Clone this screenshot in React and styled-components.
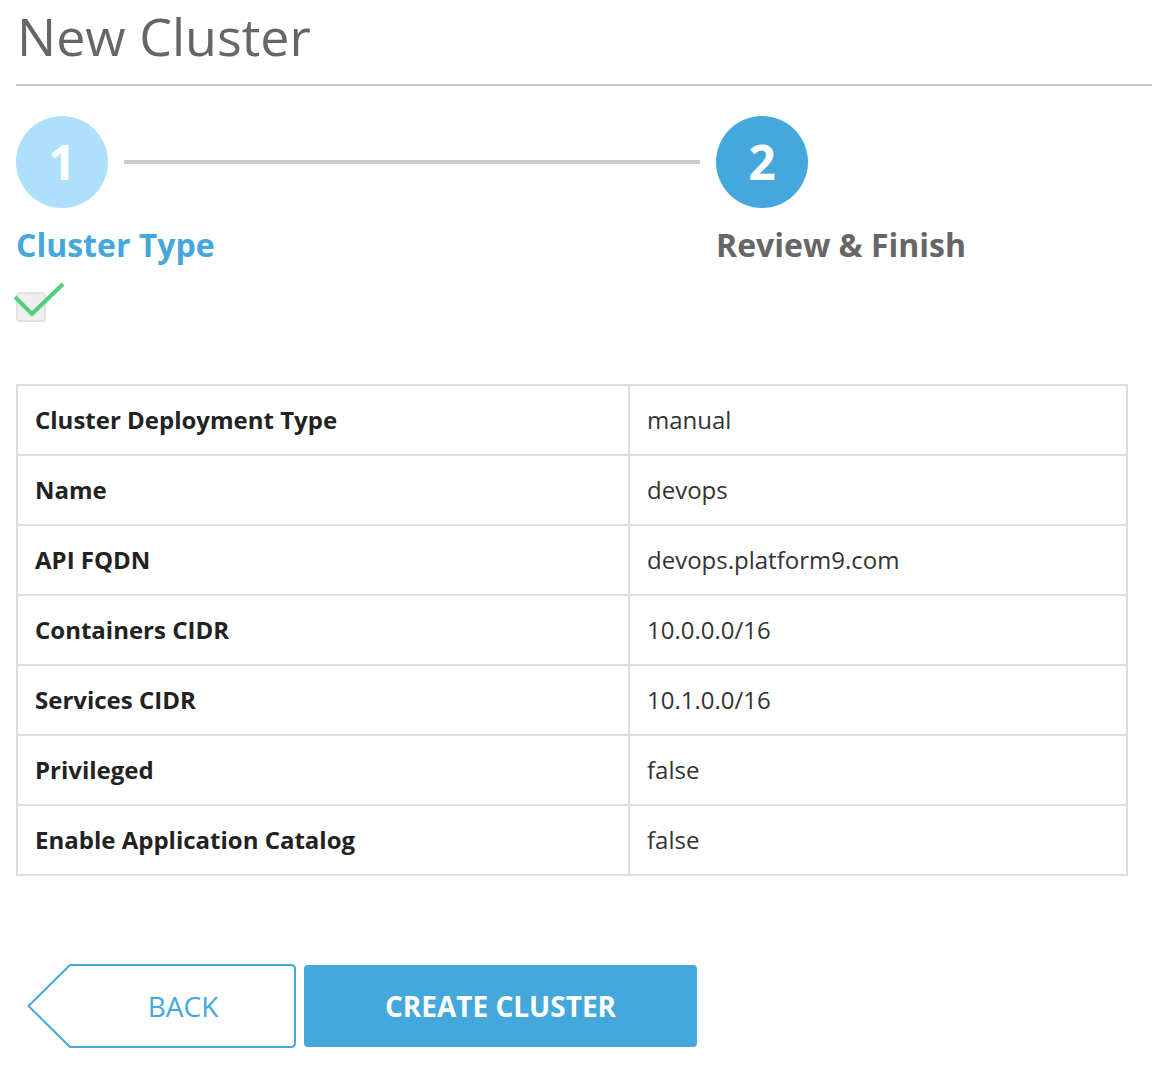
import React from "react";
import styled, { createGlobalStyle } from "styled-components";

const rows = [
  { label: "Cluster Deployment Type", value: "manual" },
  { label: "Name", value: "devops" },
  { label: "API FQDN", value: "devops.platform9.com" },
  { label: "Containers CIDR", value: "10.0.0.0/16" },
  { label: "Services CIDR", value: "10.1.0.0/16" },
  { label: "Privileged", value: "false" },
  { label: "Enable Application Catalog", value: "false" },
];

const steps = [
  { num: 1, label: "Cluster Type", done: true },
  { num: 2, label: "Review & Finish", done: false },
];

const App = () => {
  return (
    <>
      <GlobalStyle />
      <Page>
        <Title>New Cluster</Title>
        <Divider />

        <Stepper>
          {steps.map((step, index) => (
            <Step key={step.num} last={index === steps.length - 1}>
              <StepHead>
                <Circle done={step.done}>{step.num}</Circle>
                {index < steps.length - 1 && <Connector />}
              </StepHead>
              <StepLabel done={step.done}>{step.label}</StepLabel>
              {step.done && (
                <CheckWrap>
                  <CheckBox />
                  <CheckMark width="56" height="40" viewBox="0 0 56 40">
                    <polyline
                      points="3,17 20,34 51,4"
                      fill="none"
                      stroke="#4fd17a"
                      strokeWidth="4"
                    />
                  </CheckMark>
                </CheckWrap>
              )}
            </Step>
          ))}
        </Stepper>

        <Summary>
          <tbody>
            {rows.map((row) => (
              <tr key={row.label}>
                <LabelCell>{row.label}</LabelCell>
                <ValueCell>{row.value}</ValueCell>
              </tr>
            ))}
          </tbody>
        </Summary>

        <Actions>
          <BackButton>
            <BackShape width="269" height="84" viewBox="0 0 269 84">
              <path
                d="M43 1 H264 Q268 1 268 5 V79 Q268 83 264 83 H43 L1.5 42 Z"
                fill="#fff"
                stroke="#45a8dc"
                strokeWidth="2"
                strokeLinejoin="round"
              />
            </BackShape>
            <span>BACK</span>
          </BackButton>
          <CreateButton>CREATE CLUSTER</CreateButton>
        </Actions>
      </Page>
    </>
  );
};

const GlobalStyle = createGlobalStyle`
  body {
    margin: 0;
    background: #fff;
    font-family: "Open Sans", "Liberation Sans", sans-serif;
  }
`;

const Page = styled.div`
  padding: 0 0 30px 16px;
`;

const Title = styled.h1`
  margin: 0;
  padding-left: 1px;
  font-size: 52px;
  line-height: normal;
  font-weight: 400;
  color: #666;
`;

const Divider = styled.div`
  height: 2px;
  margin-top: 13px;
  background: #cccccc;
`;

const Stepper = styled.div`
  display: flex;
  margin-top: 30px;
`;

const Step = styled.div`
  width: ${(p) => (p.last ? "auto" : "700px")};
  display: flex;
  flex-direction: column;
  align-items: flex-start;
`;

const StepHead = styled.div`
  display: flex;
  align-items: center;
  align-self: stretch;
`;

const Circle = styled.div`
  width: 92px;
  height: 92px;
  border-radius: 50%;
  flex-shrink: 0;
  display: grid;
  place-items: center;
  background: ${(p) => (p.done ? "#aedffb" : "#45a8dc")};
  color: #fff;
  font-size: 48px;
  font-weight: 700;
  line-height: 1;
`;

const Connector = styled.div`
  flex: 1;
  height: 4px;
  margin: 0 16px;
  background: #cccccc;
`;

const StepLabel = styled.div`
  margin-top: 17px;
  font-size: 32px;
  line-height: 40px;
  font-weight: 700;
  color: ${(p) => (p.done ? "#45a8dc" : "#666")};
`;

const CheckWrap = styled.div`
  position: relative;
  width: 30px;
  height: 30px;
  margin-top: 27px;
`;

const CheckBox = styled.div`
  width: 30px;
  height: 30px;
  box-sizing: border-box;
  border: 2px solid #e2e2e2;
  border-radius: 4px;
  background: #efefef;
`;

const CheckMark = styled.svg`
  position: absolute;
  left: -4px;
  top: -12px;
`;

const Summary = styled.table`
  width: 1112px;
  margin-top: 62px;
  border-collapse: collapse;
  border: 2px solid #dddddd;
  font-size: 24px;
  color: #222;
`;

const Cell = styled.td`
  height: 70px;
  padding: 0 17px 2px;
  border: 2px solid #dddddd;
  box-sizing: border-box;
`;

const LabelCell = styled(Cell)`
  width: 612px;
  font-weight: 700;
`;

const ValueCell = styled(Cell)`
  font-weight: 400;
  color: #333;
`;

const Actions = styled.div`
  display: flex;
  align-items: center;
  gap: 8px;
  margin-top: 88px;
  margin-left: 11px;
`;

const BackButton = styled.button`
  position: relative;
  width: 269px;
  height: 84px;
  padding: 0 0 0 43px;
  border: none;
  background: transparent;
  cursor: pointer;
  font-family: inherit;
  font-size: 28px;
  font-weight: 400;
  color: #45a8dc;

  span {
    position: relative;
  }
`;

const BackShape = styled.svg`
  position: absolute;
  left: 0;
  top: 0;
`;

const CreateButton = styled.button`
  width: 393px;
  height: 82px;
  border: none;
  border-radius: 4px;
  background: #45a8dc;
  color: #fff;
  cursor: pointer;
  font-family: inherit;
  font-size: 28px;
  font-weight: 700;
`;

export default App;
